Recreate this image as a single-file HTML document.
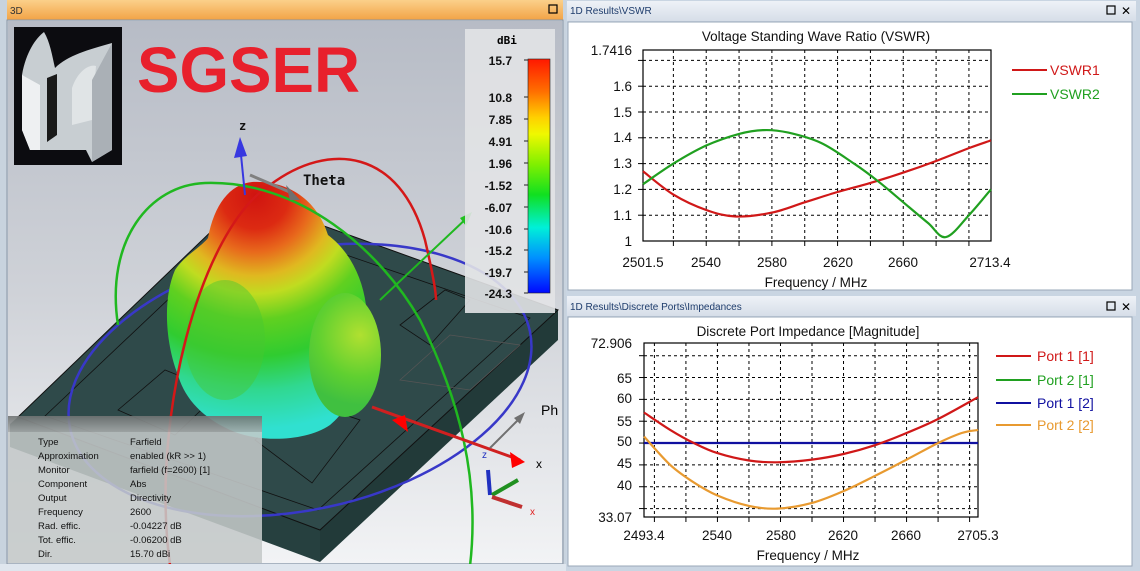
<!DOCTYPE html>
<html><head><meta charset="utf-8"><style>
html,body{margin:0;padding:0;background:#c9d5e2;}
svg{display:block}
text{font-family:"Liberation Sans",sans-serif}
.m{font-family:"DejaVu Sans Mono","Liberation Mono",monospace;font-weight:bold}
</style></head><body>
<svg id="s" width="1140" height="571" viewBox="0 0 1140 571" xmlns="http://www.w3.org/2000/svg">
<defs>
<linearGradient id="bg3d" x1="0" y1="0" x2="0" y2="1"><stop offset="0" stop-color="#b7bcc6"/><stop offset="0.5" stop-color="#cfd2d8"/><stop offset="1" stop-color="#f2f3f5"/></linearGradient>
<linearGradient id="orng" x1="0" y1="0" x2="0" y2="1"><stop offset="0" stop-color="#fbd08a"/><stop offset="1" stop-color="#f2a346"/></linearGradient>
<linearGradient id="tb" x1="0" y1="0" x2="0" y2="1"><stop offset="0" stop-color="#eef2f7"/><stop offset="1" stop-color="#d6dee8"/></linearGradient>
<linearGradient id="cb" x1="0" y1="0" x2="0" y2="1"><stop offset="0" stop-color="#ff1800"/><stop offset="0.14" stop-color="#ff7000"/><stop offset="0.25" stop-color="#ffd000"/><stop offset="0.32" stop-color="#f0f800"/><stop offset="0.45" stop-color="#80f000"/><stop offset="0.58" stop-color="#10e020"/><stop offset="0.72" stop-color="#00f0d8"/><stop offset="0.85" stop-color="#0090ff"/><stop offset="1" stop-color="#0008ff"/></linearGradient>
<radialGradient id="blob" gradientUnits="userSpaceOnUse" cx="255" cy="195" r="260"><stop offset="0" stop-color="#d01410"/><stop offset="0.13" stop-color="#dc2a12"/><stop offset="0.22" stop-color="#e86a1c"/><stop offset="0.31" stop-color="#e0b820"/><stop offset="0.38" stop-color="#c0dc20"/><stop offset="0.48" stop-color="#60d020"/><stop offset="0.62" stop-color="#30cc30"/><stop offset="0.75" stop-color="#30d890"/><stop offset="0.9" stop-color="#30e0d0"/></radialGradient>
<radialGradient id="lobe" gradientUnits="userSpaceOnUse" cx="360" cy="335" r="70"><stop offset="0" stop-color="#b0e030"/><stop offset="0.6" stop-color="#60d030"/><stop offset="1" stop-color="#40c040"/></radialGradient>
<linearGradient id="ib" x1="0" y1="0" x2="0" y2="1"><stop offset="0" stop-color="#707474"/><stop offset="1" stop-color="#a8acac"/></linearGradient>
</defs>

<rect x="0" y="0" width="566" height="571" fill="#c8d3de"/>
<rect x="7" y="0" width="556" height="20" fill="url(#orng)"/>
<text x="10" y="14" font-size="10" fill="#333">3D</text>
<rect x="549" y="5" width="8" height="8" fill="none" stroke="#000" stroke-width="1.2"/>
<rect x="8" y="21" width="554" height="542" fill="url(#bg3d)"/>
<rect x="7" y="20" width="556" height="544" fill="none" stroke="#8a96a4"/>

<polygon points="18,417 320,530 320,562 10,447 10,424" fill="#26403f"/>
<polygon points="320,530 558,310 558,340 320,562" fill="#223a39"/>
<polygon points="18,417 246,198 558,310 320,530" fill="#2f4a4a" stroke="#111" stroke-width="1"/>
<polygon points="45,416 250,222 530,318 318,510" fill="none" stroke="#111" stroke-width="0.8"/>
<polygon points="118,410 165,370 220,392 175,435" fill="none" stroke="#111" stroke-width="0.8"/>
<polygon points="255,440 300,400 360,420 312,483" fill="none" stroke="#111" stroke-width="0.8"/>
<polygon points="400,325 445,290 470,300 430,345" fill="none" stroke="#111" stroke-width="0.8"/>
<polygon points="400,380 450,335 520,345 470,390" fill="none" stroke="#555" stroke-width="0.8"/>

<ellipse cx="300" cy="380" rx="235" ry="130" transform="rotate(-12 300 380)" fill="none" stroke="#3838c8" stroke-width="2.5"/>

<path d="M252,182 C290,180 318,202 328,235 C348,250 362,275 366,305 C372,350 360,400 330,425 C305,442 260,442 235,432 C205,420 185,400 178,375 C166,345 162,300 175,270 C185,255 200,248 208,238 C214,205 230,184 252,182 Z" fill="url(#blob)"/>
<ellipse cx="345" cy="355" rx="36" ry="62" fill="url(#lobe)"/>
<ellipse cx="225" cy="340" rx="40" ry="60" fill="#48c830" opacity="0.45"/>

<path d="M170,565 C150,420 200,230 270,185 C330,140 400,150 425,240 C432,270 436,290 436,300" fill="none" stroke="#d41818" stroke-width="2.5"/>
<path d="M118,325 C105,240 150,185 205,183 C300,180 380,250 420,320 C460,400 480,480 470,566" fill="none" stroke="#20b820" stroke-width="2.5"/>
<line x1="245" y1="195" x2="240" y2="145" stroke="#3838e0" stroke-width="2"/>
<polygon points="240,137 234,158 247,156" fill="#3838e0"/>
<text x="239" y="130" class="m" font-size="12" font-weight="normal" fill="#111">z</text>
<line x1="250" y1="175" x2="292" y2="193" stroke="#808080" stroke-width="3"/>
<polygon points="300,200 286,185 290,200" fill="#707070"/>
<text x="303" y="185" class="m" font-size="14" font-weight="normal" fill="#111">Theta</text>
<line x1="380" y1="300" x2="470" y2="215" stroke="#20b820" stroke-width="2"/>
<polygon points="472,212 460,218 466,226" fill="#20c020"/>
<line x1="372" y1="407" x2="520" y2="460" stroke="#d02020" stroke-width="3"/>
<polygon points="392,420 405,415 408,432" fill="#f00"/>
<polygon points="525,462 510,452 512,468" fill="#f00"/>
<text x="536" y="468" font-size="12" fill="#000">x</text>
<line x1="490" y1="448" x2="520" y2="418" stroke="#707070" stroke-width="2"/>
<polygon points="525,412 514,418 520,424" fill="#707070"/>
<text x="541" y="415" font-size="14" fill="#000">Ph</text>
<line x1="490" y1="495" x2="488" y2="470" stroke="#2030c0" stroke-width="4"/>
<line x1="492" y1="495" x2="518" y2="480" stroke="#209020" stroke-width="4"/>
<line x1="492" y1="497" x2="522" y2="507" stroke="#c03030" stroke-width="4"/>
<text x="482" y="458" font-size="10" fill="#2030c0">z</text>
<text x="530" y="515" font-size="10" fill="#e02020">x</text>

<rect x="465" y="29" width="90" height="284" fill="#e2e3e6" opacity="0.9"/>
<text x="497" y="44" class="m" font-size="11" fill="#000">dBi</text>
<rect x="528" y="59" width="22" height="234" fill="url(#cb)" stroke="#222" stroke-width="0.6"/>
<g class="m" font-size="12" fill="#111" text-anchor="end">
<text x="512" y="65">15.7</text><text x="512" y="102">10.8</text><text x="512" y="124">7.85</text><text x="512" y="146">4.91</text><text x="512" y="168">1.96</text><text x="512" y="190">-1.52</text><text x="512" y="212">-6.07</text><text x="512" y="234">-10.6</text><text x="512" y="255">-15.2</text><text x="512" y="277">-19.7</text><text x="512" y="298">-24.3</text>
</g>
<g stroke="#222" stroke-width="1">
<line x1="524" y1="60" x2="528" y2="60"/><line x1="524" y1="97" x2="528" y2="97"/><line x1="524" y1="119" x2="528" y2="119"/><line x1="524" y1="141" x2="528" y2="141"/><line x1="524" y1="163" x2="528" y2="163"/><line x1="524" y1="185" x2="528" y2="185"/><line x1="524" y1="207" x2="528" y2="207"/><line x1="524" y1="229" x2="528" y2="229"/><line x1="524" y1="250" x2="528" y2="250"/><line x1="524" y1="272" x2="528" y2="272"/><line x1="524" y1="293" x2="528" y2="293"/>
</g>

<text x="137" y="92" font-size="64" font-weight="bold" fill="#e8202c" textLength="223" lengthAdjust="spacingAndGlyphs">SGSER</text>

<rect x="14" y="27" width="108" height="138" fill="#0c0c10"/>
<path d="M22,75 C26,52 36,38 44,32 C50,42 52,55 55,68 C68,55 88,50 112,43 L112,150 L92,162 L86,150 L30,150 L22,130 Z" fill="#c8ced2"/>
<path d="M22,75 L40,85 L40,150 L30,150 L22,130 Z" fill="#eef0f2"/>
<path d="M47,78 L57,74 L57,135 L47,142 Z" fill="#1a1a1a"/>
<path d="M72,88 C78,70 90,64 96,66 L92,120 L72,125 Z" fill="#e0e4e6"/>
<path d="M92,80 L112,43 L112,150 L92,162 Z" fill="#aab0b6"/>

<rect x="8" y="416" width="254" height="16" fill="url(#ib)" opacity="0.9"/>
<rect x="8" y="432" width="254" height="131" fill="#c4c8c8" opacity="0.88"/>
<g font-size="9.5" fill="#111">
<text x="38" y="445">Type</text><text x="130" y="445">Farfield</text>
<text x="38" y="459">Approximation</text><text x="130" y="459">enabled (kR &gt;&gt; 1)</text>
<text x="38" y="473">Monitor</text><text x="130" y="473">farfield (f=2600) [1]</text>
<text x="38" y="487">Component</text><text x="130" y="487">Abs</text>
<text x="38" y="501">Output</text><text x="130" y="501">Directivity</text>
<text x="38" y="515">Frequency</text><text x="130" y="515">2600</text>
<text x="38" y="529">Rad. effic.</text><text x="130" y="529">-0.04227 dB</text>
<text x="38" y="543">Tot. effic.</text><text x="130" y="543">-0.06200 dB</text>
<text x="38" y="557">Dir.</text><text x="130" y="557">15.70 dBi</text>
</g>
<rect x="0" y="564" width="566" height="7" fill="#dfe6ee"/>

<rect x="566" y="0" width="574" height="571" fill="#c9d5e2"/>
<rect x="567" y="1" width="569" height="20" fill="url(#tb)"/>
<text x="570" y="14" font-size="10" fill="#1e3c6c">1D Results\VSWR</text>
<rect x="1107" y="6" width="8" height="8" fill="none" stroke="#000" stroke-width="1.2"/>
<text x="1121" y="15" font-size="12" fill="#000">✕</text>
<rect x="568" y="22" width="564" height="268" fill="#fff" stroke="#9aa8b8"/>
<text x="816" y="41" font-size="13.5" fill="#111" text-anchor="middle">Voltage Standing Wave Ratio (VSWR)</text>
<g id="g1"></g>
<g font-size="13.5" fill="#111" text-anchor="end">
<text x="632" y="55">1.7416</text><text x="632" y="91">1.6</text><text x="632" y="117">1.5</text><text x="632" y="142">1.4</text><text x="632" y="168">1.3</text><text x="632" y="194">1.2</text><text x="632" y="220">1.1</text><text x="632" y="246">1</text>
</g>
<g font-size="13.5" fill="#111" text-anchor="middle">
<text x="643" y="267">2501.5</text><text x="706" y="267">2540</text><text x="772" y="267">2580</text><text x="838" y="267">2620</text><text x="903" y="267">2660</text><text x="990" y="267">2713.4</text>
<text x="816" y="287">Frequency / MHz</text>
</g>
<line x1="1012" y1="70" x2="1047" y2="70" stroke="#d01818" stroke-width="2"/>
<text x="1050" y="75" font-size="14" fill="#d01818">VSWR1</text>
<line x1="1012" y1="94" x2="1047" y2="94" stroke="#20a020" stroke-width="2"/>
<text x="1050" y="99" font-size="14" fill="#20a020">VSWR2</text>

<rect x="567" y="296" width="569" height="20" fill="url(#tb)"/>
<text x="570" y="310" font-size="10" fill="#1e3c6c">1D Results\Discrete Ports\Impedances</text>
<rect x="1107" y="302" width="8" height="8" fill="none" stroke="#000" stroke-width="1.2"/>
<text x="1121" y="311" font-size="12" fill="#000">✕</text>
<rect x="568" y="317" width="564" height="249" fill="#fff" stroke="#9aa8b8"/>
<text x="808" y="336" font-size="13.5" fill="#111" text-anchor="middle">Discrete Port Impedance [Magnitude]</text>
<g id="g2"></g>
<g font-size="13.5" fill="#111" text-anchor="end">
<text x="632" y="348">72.906</text><text x="632" y="383">65</text><text x="632" y="403">60</text><text x="632" y="426">55</text><text x="632" y="446">50</text><text x="632" y="468">45</text><text x="632" y="490">40</text><text x="632" y="522">33.07</text>
</g>
<g font-size="13.5" fill="#111" text-anchor="middle">
<text x="644" y="540">2493.4</text><text x="717" y="540">2540</text><text x="781" y="540">2580</text><text x="843" y="540">2620</text><text x="906" y="540">2660</text><text x="978" y="540">2705.3</text>
<text x="808" y="560">Frequency / MHz</text>
</g>
<line x1="996" y1="356" x2="1031" y2="356" stroke="#d01818" stroke-width="2"/><text x="1037" y="361" font-size="14" fill="#d01818">Port 1 [1]</text>
<line x1="996" y1="380" x2="1031" y2="380" stroke="#20a020" stroke-width="2"/><text x="1037" y="385" font-size="14" fill="#20a020">Port 2 [1]</text>
<line x1="996" y1="403" x2="1031" y2="403" stroke="#1010a0" stroke-width="2"/><text x="1037" y="408" font-size="14" fill="#1010a0">Port 1 [2]</text>
<line x1="996" y1="425" x2="1031" y2="425" stroke="#e89a30" stroke-width="2"/><text x="1037" y="430" font-size="14" fill="#e89a30">Port 2 [2]</text>
</svg>
<script>
var NS="http://www.w3.org/2000/svg";
function el(p,t,a){var e=document.createElementNS(NS,t);for(var k in a)e.setAttribute(k,a[k]);p.appendChild(e);return e;}
function cr(pts){var d="M"+pts[0][0].toFixed(1)+","+pts[0][1].toFixed(1);
for(var i=0;i<pts.length-1;i++){var p0=pts[i-1]||pts[i],p1=pts[i],p2=pts[i+1],p3=pts[i+2]||p2;
var c1=[p1[0]+(p2[0]-p0[0])/6,p1[1]+(p2[1]-p0[1])/6],c2=[p2[0]-(p3[0]-p1[0])/6,p2[1]-(p3[1]-p1[1])/6];
d+=" C"+c1[0].toFixed(1)+","+c1[1].toFixed(1)+" "+c2[0].toFixed(1)+","+c2[1].toFixed(1)+" "+p2[0].toFixed(1)+","+p2[1].toFixed(1);}return d;}
function chart(g,x0,x1,y0,y1,vx,hy,X,Y,curves){
 vx.forEach(function(f){var x=X(f);el(g,"line",{x1:x,y1:y0,x2:x,y2:y1,stroke:"#000","stroke-dasharray":"3,3","stroke-width":1});el(g,"line",{x1:x,y1:y1,x2:x,y2:y1+5,stroke:"#000"});});
 hy.forEach(function(v){var y=Y(v);el(g,"line",{x1:x0,y1:y,x2:x1,y2:y,stroke:"#000","stroke-dasharray":"3,3","stroke-width":1});el(g,"line",{x1:x0-5,y1:y,x2:x0,y2:y,stroke:"#000"});});
 el(g,"rect",{x:x0,y:y0,width:x1-x0,height:y1-y0,fill:"none",stroke:"#000","stroke-width":1.2});
 curves.forEach(function(c){var pts=c.p.map(function(q){return [X(q[0]),Y(q[1])]});el(g,"path",{d:cr(pts),fill:"none",stroke:c.c,"stroke-width":2.2});});
}
var X1=function(f){return 643+(f-2501.5)*1.642},Y1=function(v){return 241-(v-1)*258};
chart(document.getElementById("g1"),643,991,50,241,[2520,2540,2560,2580,2600,2620,2640,2660,2680,2700],[1.1,1.2,1.3,1.4,1.5,1.6,1.7],X1,Y1,[
{c:"#d01818",p:[[2501.5,1.27],[2520,1.18],[2540,1.12],[2558,1.095],[2580,1.11],[2600,1.15],[2620,1.19],[2640,1.225],[2660,1.265],[2680,1.31],[2700,1.36],[2713.4,1.39]]},
{c:"#20a020",p:[[2501.5,1.22],[2520,1.3],[2540,1.37],[2560,1.415],[2575,1.43],[2590,1.42],[2610,1.38],[2630,1.3],[2645,1.23],[2660,1.15],[2675,1.07],[2686,1.015],[2700,1.1],[2713.4,1.2]]}]);
var X2=function(f){return 644+(f-2493.4)*1.576},Y2=function(z){return 517-(z-33.07)*4.368};
chart(document.getElementById("g2"),644,978,343,517,[2500,2520,2540,2560,2580,2600,2620,2640,2660,2680,2700],[35,40,45,50,55,60,65,70],X2,Y2,[
{c:"#1010a0",p:[[2493.4,50],[2705.3,50]]},
{c:"#d01818",p:[[2493.4,57],[2510,53],[2525,50],[2540,47.7],[2560,46],[2578,45.6],[2600,46.2],[2620,47.5],[2640,49.5],[2660,52.3],[2680,55.5],[2705.3,60.5]]},
{c:"#e89a30",p:[[2493.4,51.5],[2510,45],[2525,41],[2540,38],[2560,35.6],[2578,35],[2600,36.3],[2620,39],[2640,42.5],[2660,46.2],[2680,50],[2695,52.3],[2705.3,53]]}]);
</script>
</body></html>
